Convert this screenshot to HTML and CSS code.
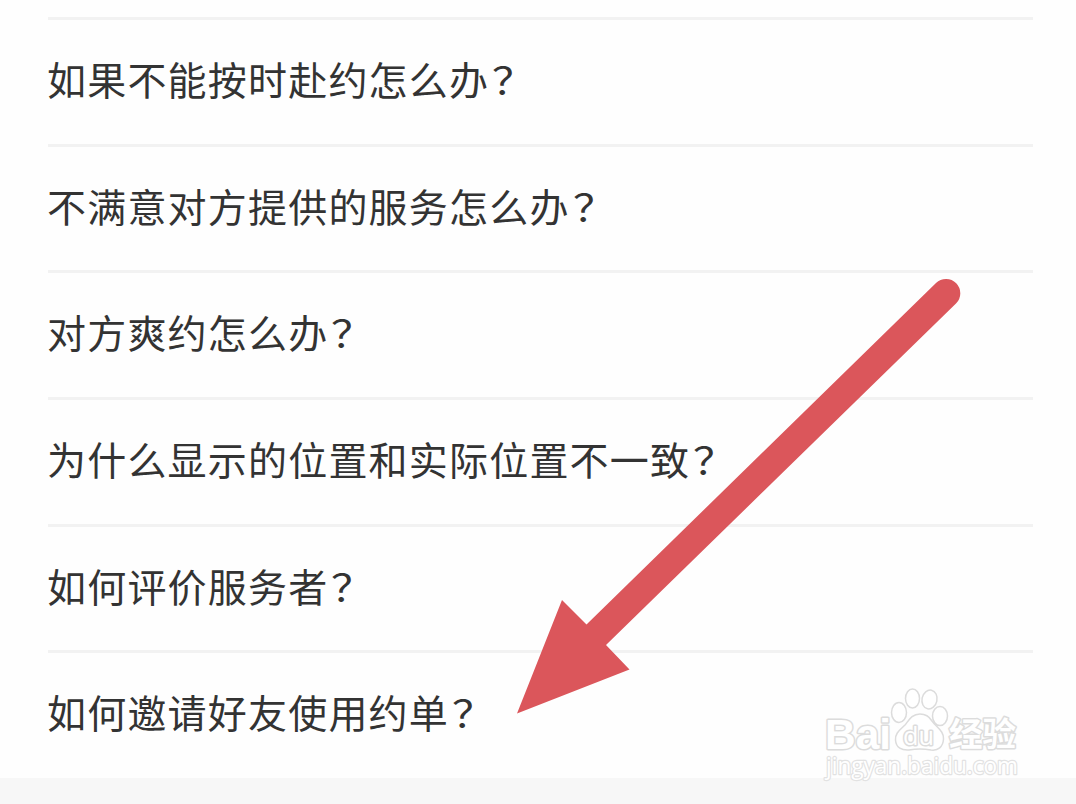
FILE: index.html
```html
<!DOCTYPE html>
<html lang="zh-CN">
<head>
    <meta charset="UTF-8">
    <meta name="viewport" content="width=device-width, initial-scale=1.0">
    <title>常见问题</title>
    <link rel="stylesheet" href="styles.css">
</head>
<body>
    <div class="faq-page">
        <ul class="faq-list">
            <li class="faq-item">如果不能按时赴约怎么办<span class="mark">？</span></li>
            <li class="faq-item">不满意对方提供的服务怎么办<span class="mark">？</span></li>
            <li class="faq-item">对方爽约怎么办<span class="mark">？</span></li>
            <li class="faq-item">为什么显示的位置和实际位置不一致<span class="mark">？</span></li>
            <li class="faq-item">如何评价服务者<span class="mark">？</span></li>
            <li class="faq-item">如何邀请好友使用约单<span class="mark">？</span></li>
        </ul>
    </div>

    <svg class="arrow" viewBox="0 0 1076 804">
        <path d="M517 713.5 L562 600 L586.5 624.5 L936 283 A14 14 0 0 1 956 303.500 L606 645 L629.500 669.500 Z"/>
    </svg>

    <svg class="watermark" viewBox="0 0 230 134">
        <g class="paw">
            <ellipse cx="89" cy="42.500" rx="7.500" ry="10"/>
            <ellipse cx="102.500" cy="28.500" rx="7" ry="9.500"/>
            <ellipse cx="119.500" cy="29.500" rx="7.500" ry="9.500" transform="rotate(12 119.500 29.500)"/>
            <ellipse cx="130" cy="46" rx="7.500" ry="9.500"/>
            <path d="M110 44 C102 44 99 50 95 55 C90 60 85 63 85.500 70 C86 78 92 80.500 99 80 C107 78.500 113 78.500 121 80 C128 81 133 77 133.500 69 C134 61 127 58 122 51 C119 46 116 44 110 44 Z"/>
        </g>
        <text class="brand" x="15" y="78.500" textLength="66" lengthAdjust="spacingAndGlyphs">Bai</text>
        <text class="du" x="93" y="74.500" textLength="31" lengthAdjust="spacingAndGlyphs">du</text>
        <text class="jingyan" x="139" y="75.500" textLength="67" lengthAdjust="spacingAndGlyphs">经验</text>
        <text class="site" x="16" y="104" textLength="192" lengthAdjust="spacingAndGlyphs">jingyan.baidu.com</text>
    </svg>
</body>
</html>
```

FILE: styles.css
```css
* {
    box-sizing: border-box;
}
body {
    margin: 0;
    height: 804px;
    overflow: hidden;
    background: #f7f7f7;
    color: #333;
    font-family: "Noto Sans CJK SC", sans-serif;
}
.faq-page {
    height: 778px;
    padding: 17px 43px 0 48px;
    background: #fefefe;
}
.faq-list {
    margin: 0;
    padding: 0;
    list-style: none;
}
.faq-item {
    height: 126.7px;
    border-top: 3px solid #f2f2f2;
    font-size: 39px;
    line-height: 117px;
    letter-spacing: 1.2px;
    text-indent: -1px;
    white-space: nowrap;
}
.mark {
    display: inline-block;
    margin-left: 3px;
    font-size: 37px;
    line-height: 1;
    text-indent: 0;
    transform: scaleX(1.16);
    transform-origin: left;
}
.arrow {
    position: absolute;
    top: 0;
    left: 0;
    width: 1076px;
    height: 804px;
    fill: #db565b;
}
.watermark {
    position: absolute;
    left: 810px;
    top: 670px;
    width: 230px;
    height: 134px;
    fill: #fff;
    stroke: #dcdcdc;
    stroke-width: 1.5;
    stroke-linejoin: round;
}
.brand,
.du,
.jingyan {
    paint-order: stroke;
    stroke-width: 3;
}
.brand {
    font: bold 42px "Liberation Sans", sans-serif;
}
.du {
    font: 25px "Open Sans", sans-serif;
}
.jingyan {
    font: bold 33px "Noto Sans CJK SC", sans-serif;
}
.site {
    font: 23px "Open Sans", sans-serif;
    paint-order: stroke;
    stroke: #e2e2e2;
    stroke-width: 2.4;
}
```
